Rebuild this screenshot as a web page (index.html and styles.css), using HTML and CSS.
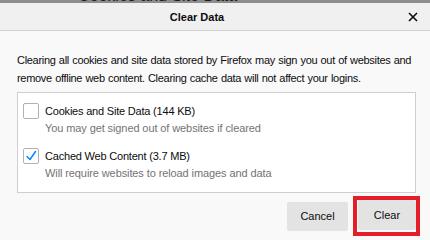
FILE: index.html
```html
<!DOCTYPE html>
<html>
<head>
<meta charset="utf-8">
<link rel="stylesheet" href="styles.css">
</head>
<body>
<div class="strip"><span class="strip-text">Cookies and Site Data</span></div>
<div class="dialog">
  <div class="header">
    <div class="title">Clear Data</div>
    <div class="close">
      <svg width="10" height="10" viewBox="0 0 10 10"><path d="M1 1 L9 9 M9 1 L1 9" stroke="#0c0c0d" stroke-width="1.6" fill="none"/></svg>
    </div>
  </div>
  <div class="content">
    <p class="desc">Clearing all cookies and site data stored by Firefox may sign you out of websites and remove offline web content. Clearing cache data will not affect your logins.</p>
    <div class="group">
      <div class="item">
        <div class="row"><span class="box"></span><span class="label">Cookies and Site Data (144 KB)</span></div>
        <div class="sub">You may get signed out of websites if cleared</div>
      </div>
      <div class="item">
        <div class="row"><span class="box"><svg width="14" height="14" viewBox="0 0 14 14"><path d="M3 7.5 L6 10.5 L11.5 2.5" stroke="#0a84ff" stroke-width="1.5" fill="none" stroke-linecap="round" stroke-linejoin="round"/></svg></span><span class="label">Cached Web Content (3.7 MB)</span></div>
        <div class="sub">Will require websites to reload images and data</div>
      </div>
    </div>
    <div class="footer">
      <button class="btn">Cancel</button>
      <span class="highlight"><button class="btn btn-clear">Clear</button></span>
    </div>
  </div>
</div>
</body>
</html>
```
FILE: styles.css
```css
html, body {
  margin: 0;
  padding: 0;
  background: #f9f9f9;
  font-family: "Liberation Sans", Arial, sans-serif;
  color: #0c0c0d;
  overflow: hidden;
}
.strip {
  height: 3px;
  background: #8d8d8d;
  overflow: hidden;
  padding-left: 78px;
}
.strip-text {
  display: block;
  font-size: 16px;
  line-height: 18px;
  margin-top: -13px;
  color: #1a1a1a;
}
.header {
  height: 27px;
  background: #f0f0f0;
  border-bottom: 1px solid #d2d2d2;
  display: flex;
  align-items: center;
  padding-right: 10px;
  gap: 12px;
}
.title {
  flex: 1;
  text-align: center;
  font-weight: bold;
  font-size: 11px;
}
.close {
  width: 14px;
  height: 14px;
  display: flex;
  align-items: center;
  justify-content: center;
}
.content {
  padding: 0 14px 0 17px;
}
.desc {
  margin: 20px 0 0;
  font-size: 11px;
  letter-spacing: -0.3px;
  word-spacing: 0.5px;
  line-height: 18px;
  color: #0c0c0d;
}
.group {
  margin-top: 5px;
  background: #fff;
  border: 1px solid #cfcfcf;
  padding: 10px 5px 11px;
  display: flex;
  flex-direction: column;
  gap: 12px;
}
.row {
  display: flex;
  align-items: center;
  gap: 6px;
  height: 16px;
}
.box {
  width: 14px;
  height: 14px;
  border: 1px solid #b1b1b3;
  border-radius: 2px;
  background: #fff;
  display: flex;
  align-items: center;
  justify-content: center;
}
.label {
  font-size: 11px;
  letter-spacing: -0.2px;
  color: #0c0c0d;
}
.sub {
  margin-left: 22px;
  margin-top: 1px;
  font-size: 11px;
  letter-spacing: -0.1px;
  line-height: 16px;
  color: #737373;
}
.footer {
  display: flex;
  justify-content: flex-end;
  align-items: center;
  gap: 5px;
  margin-top: 3px;
  margin-right: -4px;
}
.btn {
  font-family: "Liberation Sans", Arial, sans-serif;
  font-size: 11px;
  color: #0c0c0d;
  background: #e3e3e3;
  border: none;
  border-radius: 2px;
  height: 29px;
  width: 61px;
  padding: 0;
}
.highlight {
  display: flex;
  border: 4px solid #e31e26;
  padding: 0 0 2px 1px;
}
.btn-clear {
  width: 58px;
  height: 30px;
}
```
